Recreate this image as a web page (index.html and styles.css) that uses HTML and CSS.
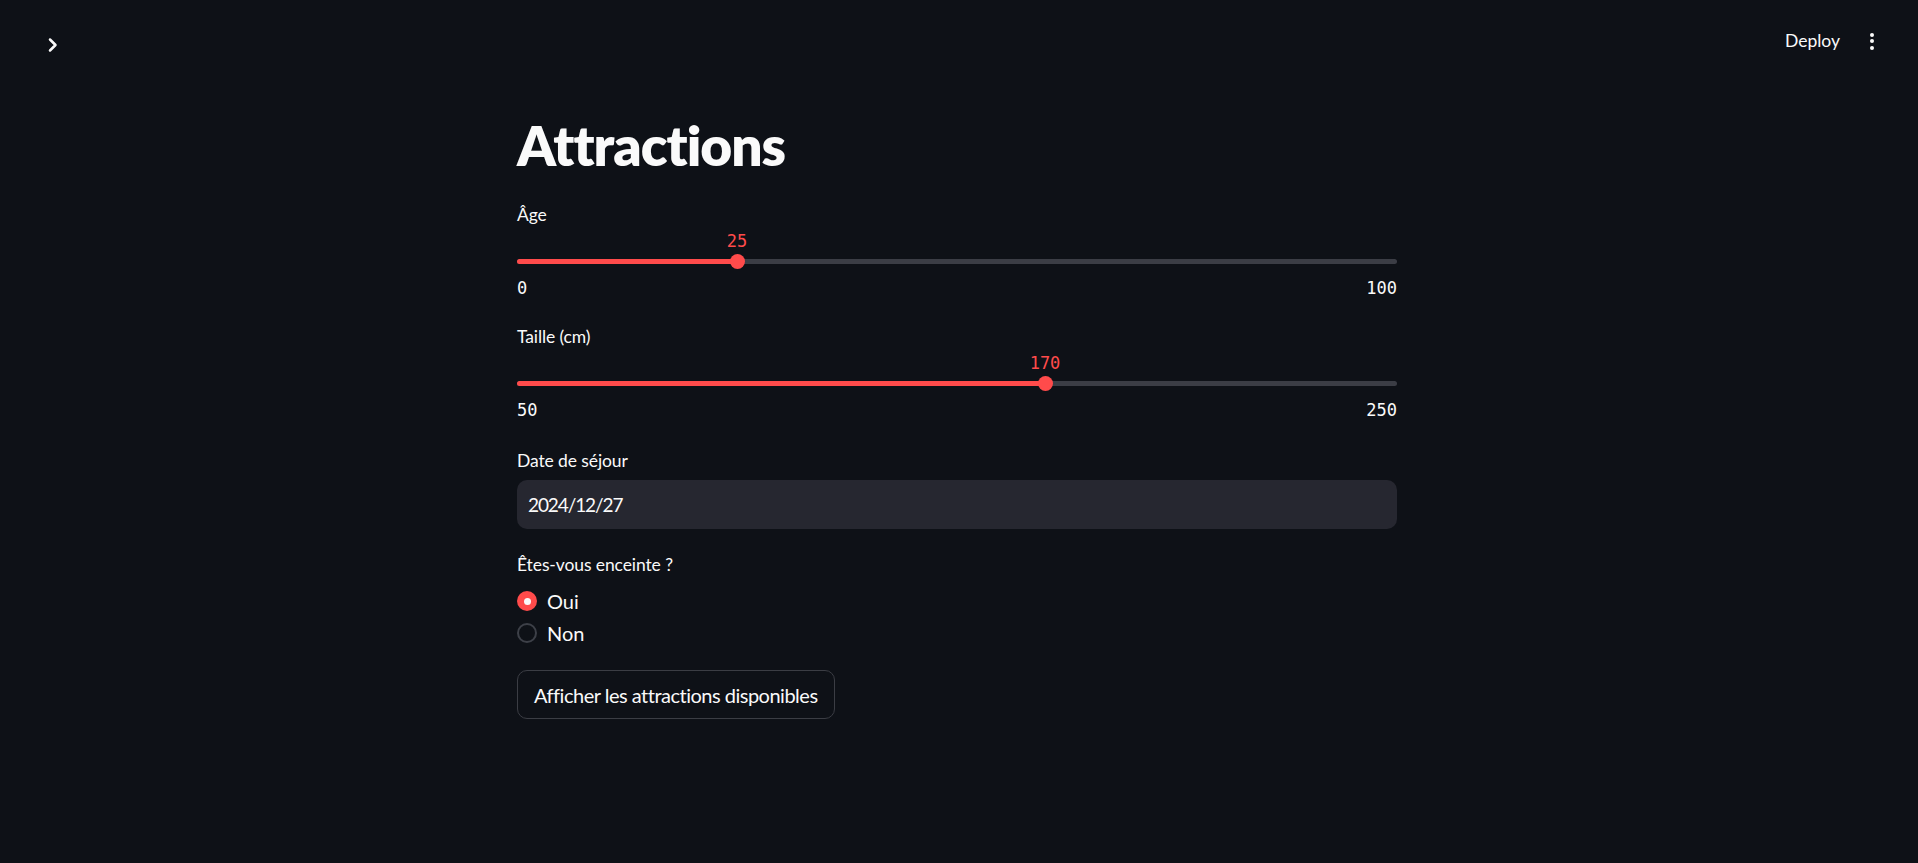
FILE: index.html
```html
<!DOCTYPE html>
<html lang="fr">
<head>
<meta charset="utf-8">
<title>Attractions</title>
<link rel="stylesheet" href="styles.css">
</head>
<body>
<header class="topbar">
  <button class="sidebar-toggle" aria-label="Ouvrir la barre latérale">
    <svg width="20" height="20" viewBox="0 0 20 20"><path d="M7 4.5 L12.5 10 L7 15.5" fill="none" stroke="#fafafa" stroke-width="2.5" stroke-linecap="round" stroke-linejoin="round"/></svg>
  </button>
  <div class="toolbar">
    <span class="deploy">Deploy</span>
    <span class="kebab" aria-label="Menu"><i></i><i></i><i></i></span>
  </div>
</header>
<main class="main">
  <div class="block">
    <h1 class="title">Attractions</h1>

    <section class="widget slider-widget">
      <div class="label">Âge</div>
      <div class="slider">
        <div class="track">
          <div class="fill" style="width:25%"></div>
          <div class="thumb" style="left:25%"><span class="thumb-value">25</span></div>
        </div>
        <div class="ticks"><span>0</span><span>100</span></div>
      </div>
    </section>

    <section class="widget slider-widget">
      <div class="label">Taille (cm)</div>
      <div class="slider">
        <div class="track">
          <div class="fill" style="width:60%"></div>
          <div class="thumb" style="left:60%"><span class="thumb-value">170</span></div>
        </div>
        <div class="ticks"><span>50</span><span>250</span></div>
      </div>
    </section>

    <section class="widget date-widget">
      <div class="label">Date de séjour</div>
      <div class="input">2024/12/27</div>
    </section>

    <section class="widget radio-widget">
      <div class="label">Êtes-vous enceinte ?</div>
      <div class="radio-group">
        <div class="radio-option"><span class="radio checked"></span><span>Oui</span></div>
        <div class="radio-option"><span class="radio"></span><span>Non</span></div>
      </div>
    </section>

    <button class="btn">Afficher les attractions disponibles</button>
  </div>
</main>
</body>
</html>
```

FILE: styles.css
```css
* { box-sizing: border-box; }
html, body { margin: 0; padding: 0; }
body {
  background: #0e1117;
  color: #fafafa;
  font-family: Lato, "Noto Sans", sans-serif;
  height: 863px;
  overflow: hidden;
}
.topbar {
  display: flex;
  justify-content: space-between;
  align-items: flex-start;
  height: 92px;
  padding: 0 44px 0 43px;
}
.sidebar-toggle {
  background: none;
  border: 0;
  padding: 0;
  margin-top: 35px;
  width: 20px;
  height: 20px;
  display: block;
}
.sidebar-toggle svg { display: block; }
.toolbar {
  display: flex;
  align-items: center;
  gap: 30px;
  margin-top: 28px;
  height: 26px;
}
.deploy {
  font-size: 17.5px;
  line-height: 26px;
  color: #fafafa;
}
.kebab {
  display: flex;
  flex-direction: column;
  gap: 2.5px;
  width: 4px;
}
.kebab i {
  display: block;
  width: 4px;
  height: 4px;
  border-radius: 50%;
  background: #fafafa;
}
.main {
  display: flex;
  justify-content: center;
  padding: 20px 4px 0 0;
}
.block {
  width: 880px;
  display: flex;
  flex-direction: column;
}
.title {
  margin: 0;
  font-size: 55px;
  font-weight: 800;
  line-height: 66px;
  letter-spacing: -1px;
}
.widget { display: flex; flex-direction: column; }
.label {
  font-size: 17.5px;
  line-height: 26px;
  color: #fafafa;
  letter-spacing: -0.1px;
}
.slider-widget { margin-top: 24px; }
.slider-widget + .slider-widget { margin-top: 26px; }
.slider {
  padding-top: 31px;
  position: relative;
}
.track {
  position: relative;
  height: 5px;
  border-radius: 3px;
  background: #3b3d45;
}
.fill {
  height: 5px;
  border-radius: 3px;
  background: #ff4b4b;
}
.thumb {
  position: absolute;
  top: -5px;
  width: 15px;
  height: 15px;
  margin-left: -7.5px;
  border-radius: 50%;
  background: #ff4b4b;
}
.thumb-value {
  position: absolute;
  bottom: 18px;
  left: 50%;
  transform: translateX(-50%);
  font-family: "DejaVu Sans Mono", monospace;
  font-size: 17px;
  line-height: 20px;
  color: #ff4b4b;
  white-space: nowrap;
}
.ticks {
  display: flex;
  justify-content: space-between;
  margin-top: 14px;
  font-family: "DejaVu Sans Mono", monospace;
  font-size: 17px;
  line-height: 20px;
  color: #fafafa;
}
.date-widget { margin-top: 28px; }
.input {
  margin-top: 6px;
  height: 49px;
  border-radius: 10px;
  background: #262730;
  padding: 0 11px;
  display: flex;
  align-items: center;
  font-size: 19px;
  letter-spacing: -1.1px;
  color: #fafafa;
}
.radio-widget { margin-top: 23px; }
.radio-group {
  display: flex;
  flex-direction: column;
  gap: 12px;
  margin-top: 13px;
}
.radio-option {
  display: flex;
  align-items: center;
  gap: 10px;
  font-size: 20px;
  line-height: 20px;
}
.radio {
  width: 20px;
  height: 20px;
  border-radius: 50%;
  border: 2px solid #3d4048;
  display: flex;
  align-items: center;
  justify-content: center;
}
.radio.checked {
  border: 0;
  background: #ff4b4b;
}
.radio.checked::after {
  content: "";
  width: 7px;
  height: 7px;
  border-radius: 50%;
  background: #fafafa;
}
.btn {
  align-self: flex-start;
  margin-top: 27px;
  height: 49px;
  padding: 0 16px;
  background: #0e1117;
  border: 1px solid #3b3d44;
  border-radius: 10px;
  color: #fafafa;
  font-family: Lato, "Noto Sans", sans-serif;
  font-size: 20px;
  letter-spacing: -0.5px;
}
```
